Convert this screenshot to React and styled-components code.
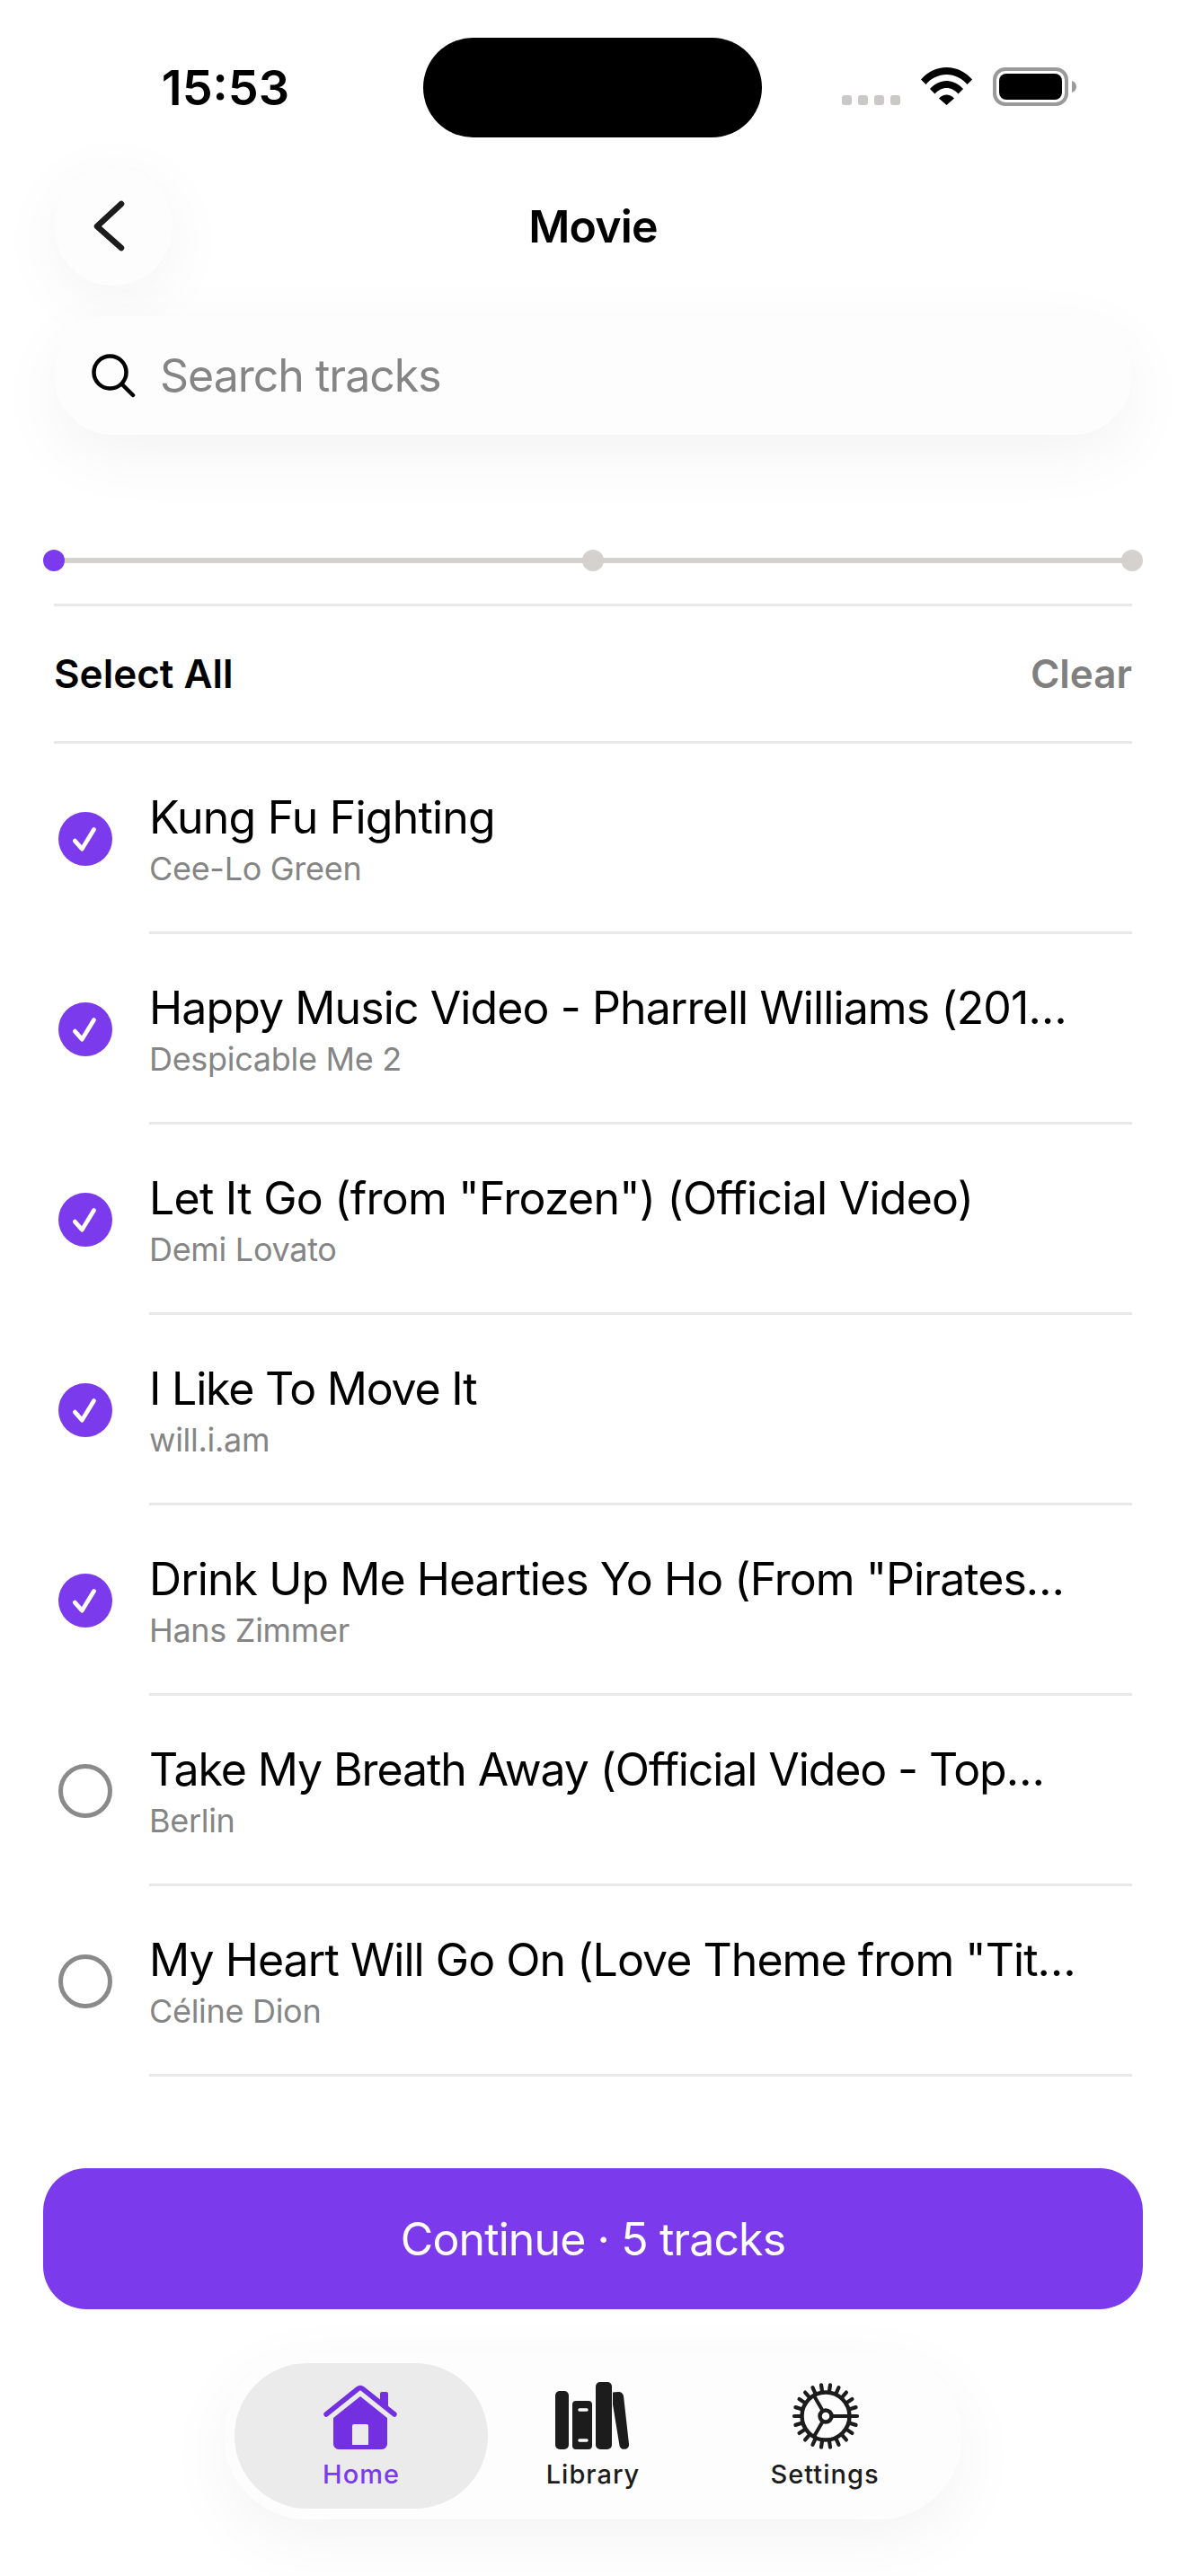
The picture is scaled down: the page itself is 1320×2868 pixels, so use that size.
import React from "react";
import styled, { createGlobalStyle } from "styled-components";

const Global = createGlobalStyle`
  html, body { margin: 0; padding: 0; background: #fff; }
  body { font-family: Inter, "Liberation Sans", sans-serif; color: #000; }
`;

const Screen = styled.div`
  width: 1320px; height: 2868px; background: #fff; overflow: hidden; display: flex; flex-direction: column;
`;
const StatusBar = styled.div`
  height: 186px; flex: none; display: grid; grid-template-columns: 471px 377px 1fr; align-items: start;
`;
const Time = styled.div`
  font-size: 54px; font-weight: 600; line-height: 60px; padding-top: 68px; text-align: center; width: 502px; letter-spacing: 0;
`;
const Island = styled.div`
  margin-top: 42px; width: 377px; height: 111px; border-radius: 56px; background: #000;
`;
const StatusIcons = styled.div`
  margin-top: 75px; margin-left: 89px; display: flex; align-items: flex-start;
`;
const SignalDots = styled.div`
  margin-top: 31px; display: flex; gap: 7px; margin-right: 23px;
`;
const SignalDot = styled.span`
  width: 11px; height: 11px; border-radius: 3px; background: #cbc9c7;
`;
const Wifi = styled.svg`
  width: 57px; height: 42px; margin-right: 23px; display: block;
`;
const Battery = styled.svg`
  width: 93px; height: 43px; display: block;
`;
const Header = styled.div`
  flex: none; padding: 0 60px; height: 132px; display: grid; grid-template-columns: 132px 1fr 132px; align-items: center;
`;
const BackButton = styled.div`
  width: 132px; height: 132px; border-radius: 50%; background: #fdfdfd; display: flex; align-items: center; justify-content: center;
  box-shadow: 0 16px 72px rgba(0,0,0,.05);
`;
const Title = styled.div`
  font-size: 50px; font-weight: 600; text-align: center; line-height: 60px; letter-spacing: -0.8px;
`;
const SearchBox = styled.div`
  flex: none; margin: 34px 60px 0; height: 132px; border-radius: 66px; background: #fdfdfd; display: flex; align-items: center; padding-left: 41px; gap: 27px;
  box-shadow: 0 22px 76px rgba(0,0,0,.05);
`;
const SearchText = styled.div`
  font-size: 50px; color: #858585; line-height: 60px; letter-spacing: -1px;
`;
const SliderRow = styled.div`
  flex: none; margin: 128px 48px 0; position: relative; height: 24px; display: flex; align-items: center; justify-content: space-between;
`;
const SliderLine = styled.div`
  position: absolute; left: 12px; right: 12px; top: 9px; height: 6px; background: #d5d1ce;
`;
const SliderDot = styled.span`
  position: relative; width: 24px; height: 24px; border-radius: 50%; background: ${p => p.$on ? "#7c3aed" : "#d5d1ce"};
`;
const SelectBar = styled.div`
  flex: none; margin: 36px 60px 0; height: 156px; border-top: 3px solid #e8e8e8; border-bottom: 3px solid #e8e8e8; display: flex; align-items: center; justify-content: space-between; box-sizing: border-box;
`;
const SelectAll = styled.div`
  font-size: 44px; font-weight: 600; line-height: 54px; color: ${p => p.$muted ? "#808080" : "#000"};
`;
const List = styled.div`
  flex: none; padding-left: 60px;
`;
const Row = styled.div`
  height: 212px; display: flex; align-items: center; box-sizing: border-box;
`;
const Check = styled.div`
  flex: none; width: 60px; height: 60px; margin: 0 41px 0 5px; border-radius: 50%; box-sizing: border-box; display: flex; align-items: center; justify-content: center;
  background: ${p => p.$on ? "#7c3aed" : "transparent"};
  border: ${p => p.$on ? "none" : "5px solid #8a8a8a"};
`;
const RowBody = styled.div`
  flex: none; width: 1094px; height: 212px; box-sizing: border-box; border-bottom: 3px solid #e8e8e8; padding-top: 52px;
`;
const TrackTitle = styled.div`
  font-size: 50px; line-height: 60px; white-space: nowrap; letter-spacing: ${p => p.$track}px;
`;
const TrackSub = styled.div`
  font-size: 36px; line-height: 44px; color: #858585; margin-top: 5px; letter-spacing: -0.3px;
`;
const Continue = styled.div`
  flex: none; margin: 102px 48px 0; height: 157px; border-radius: 48px; background: #7c3aed; color: #fff; font-size: 50px; letter-spacing: -0.9px; display: flex; align-items: center; justify-content: center;
`;
const TabBar = styled.div`
  flex: none; align-self: center; margin-top: 48px; width: 822px; height: 186px; padding: 12px; box-sizing: border-box; border-radius: 93px; background: #fdfdfd; display: flex;
  box-shadow: 0 22px 76px rgba(0,0,0,.05);
`;
const Tab = styled.div`
  flex: ${p => p.$wide ? "0 0 282px" : "1"}; height: 162px; border-radius: 81px; background: ${p => p.$active ? "#ebebeb" : "transparent"};
  color: ${p => p.$active ? "#7c3aed" : "#1c1c1c"}; display: flex; flex-direction: column; align-items: center; padding-top: 24px; box-sizing: border-box;
`;
const TabLabel = styled.div`
  font-size: 29px; font-weight: 500; line-height: 36px; margin-top: 8px; letter-spacing: 1px;
`;
const TabIcon = styled.svg`
  width: 84px; height: 74px; display: block; overflow: visible;
`;

const tracks = [
  ["Kung Fu Fighting", "Cee-Lo Green", 1, -0.8],
  ["Happy Music Video - Pharrell Williams (201…", "Despicable Me 2", 1, -0.9],
  ['Let It Go (from "Frozen") (Official Video)', "Demi Lovato", 1, -0.75],
  ["I Like To Move It", "will.i.am", 1, -1.2],
  ['Drink Up Me Hearties Yo Ho (From "Pirates…', "Hans Zimmer", 1, -0.95],
  ["Take My Breath Away (Official Video - Top…", "Berlin", 0, -1.1],
  ['My Heart Will Go On (Love Theme from "Tit…', "Céline Dion", 0, -0.95],
];

const gearTeeth = Array.from({ length: 22 }, (_, i) => 90 + (i * 360) / 22);

export default function App() {
  return (
    <Screen>
      <Global />
      <StatusBar>
        <Time>15:53</Time>
        <Island />
        <StatusIcons>
          <SignalDots>{[0, 1, 2, 3].map(i => <SignalDot key={i} />)}</SignalDots>
          <Wifi viewBox="0 0 57 42">
            <path d="M0 13.5C7.5 5 17.5 0 28.5 0S49.5 5 57 13.5L51.5 19C45.5 12 37.5 8 28.5 8S11.5 12 5.5 19Z" />
            <path d="M10 24C15 18.5 21.5 15 28.5 15S42 18.5 47 24L41.5 29.5C38 25.5 33.5 23 28.5 23S19 25.5 15.5 29.5Z" />
            <path d="M20 34.5C22.5 32 25.5 30.5 28.5 30.5S34.5 32 37 34.5L28.5 42Z" />
          </Wifi>
          <Battery viewBox="0 0 93 43">
            <rect x="2" y="2" width="80" height="39" rx="12" fill="none" stroke="#9a9a9a" strokeWidth="4" />
            <rect x="7" y="7" width="70" height="29" rx="8" fill="#000" />
            <path d="M88 15c3 1 5 3 5 6.5s-2 5.5-5 6.5Z" fill="#9a9a9a" />
          </Battery>
        </StatusIcons>
      </StatusBar>
      <Header>
        <BackButton>
          <svg width="60" height="60" viewBox="0 0 60 60" fill="none" stroke="#1c1c1c" strokeWidth="6.5" strokeLinecap="round" strokeLinejoin="round">
            <path d="M39 5 12 30l27 24" />
          </svg>
        </BackButton>
        <Title>Movie</Title>
        <span />
      </Header>
      <SearchBox>
        <svg width="50" height="50" viewBox="0 0 50 50" fill="none" stroke="#000" strokeWidth="4.5" strokeLinecap="round">
          <circle cx="21.5" cy="21.5" r="18" />
          <path d="M34.5 34.5 47 47" />
        </svg>
        <SearchText>Search tracks</SearchText>
      </SearchBox>
      <SliderRow>
        <SliderLine />
        <SliderDot $on />
        <SliderDot />
        <SliderDot />
      </SliderRow>
      <SelectBar>
        <SelectAll>Select All</SelectAll>
        <SelectAll $muted>Clear</SelectAll>
      </SelectBar>
      <List>
        {tracks.map(([t, s, on, track]) => (
          <Row key={t}>
            <Check $on={!!on}>
              {on ? (
                <svg width="36" height="36" viewBox="0 0 34 34" fill="none" stroke="#fff" strokeWidth="4.5" strokeLinecap="round" strokeLinejoin="round">
                  <path d="M6 19l7.5 8.5L26 7" />
                </svg>
              ) : null}
            </Check>
            <RowBody>
              <TrackTitle $track={track}>{t}</TrackTitle>
              <TrackSub>{s}</TrackSub>
            </RowBody>
          </Row>
        ))}
      </List>
      <Continue>Continue · 5 tracks</Continue>
      <TabBar>
        <Tab $wide $active>
          <TabIcon viewBox="0 0 84 74">
            <path d="M3 33 38.5 4.5a4 4 0 0 1 5 0L79 33" fill="none" stroke="#7230e0" strokeWidth="5.5" strokeLinecap="round" strokeLinejoin="round" />
            <path d="M63 19V10a2 2 0 0 1 2-2h5a2 2 0 0 1 2 2v16Z" fill="#7230e0" />
            <path fillRule="evenodd" fill="#7230e0" d="M41 13 71 37V66a6 6 0 0 1-6 6H17a6 6 0 0 1-6-6V37ZM34 44a2 2 0 0 0-2 2V67H50V46a2 2 0 0 0-2-2Z" />
          </TabIcon>
          <TabLabel>Home</TabLabel>
        </Tab>
        <Tab>
          <TabIcon viewBox="0 0 84 74" fill="#1c1c1c">
            <rect x="0" y="7" width="15" height="65" rx="5" />
            <path fillRule="evenodd" d="M23 18h14c2.5 0 4 1.5 4 4v46c0 2.5-1.5 4-4 4H23c-2.5 0-4-1.5-4-4V22c0-2.5 1.5-4 4-4ZM27 26.3a1.7 1.7 0 0 0 0 3.4h8a1.7 1.7 0 0 0 0-3.4ZM27 60.3a1.7 1.7 0 0 0 0 3.4h8a1.7 1.7 0 0 0 0-3.4Z" />
            <rect x="45" y="-3" width="18" height="75" rx="5" />
            <path d="M64 8.5 70 8c3-.3 5.5 1.5 6 4.5L82 66c.4 3-1.3 5.3-4 5.7-3.200.6-6-.7-6.500-4L64 22Z" />
          </TabIcon>
          <TabLabel>Library</TabLabel>
        </Tab>
        <Tab $wide>
          <TabIcon viewBox="0 0 84 74" fill="none" stroke="#1c1c1c">
            <g transform="translate(43 35)">
              {gearTeeth.map(a => <path key={a} transform={`rotate(${a})`} d="M0 -27V-35" strokeWidth="4.2" strokeLinecap="round" />)}
              <circle r="26.5" strokeWidth="4.5" />
              <circle r="6.5" strokeWidth="4.5" />
              <path strokeWidth="4" d="M6.5 0H27M-3.250 -5.630-13.500-23.400M-3.250 5.630-13.500 23.400" />
            </g>
          </TabIcon>
          <TabLabel>Settings</TabLabel>
        </Tab>
      </TabBar>
    </Screen>
  );
}
